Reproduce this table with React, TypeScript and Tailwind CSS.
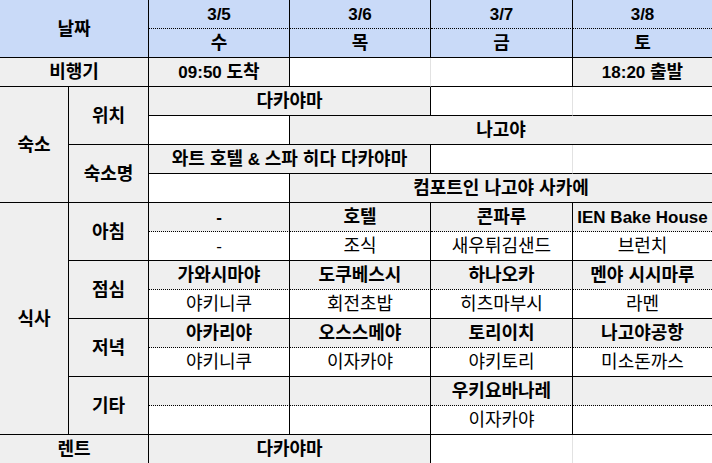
import React from 'react';

type Bg = 'blue' | 'gray' | 'white';
type Edge = 'solid' | 'light' | 'dotted' | 'none';

const bgClass: Record<Bg, string> = {
  blue: 'bg-[#c9daf8]',
  gray: 'bg-[#efefef]',
  white: 'bg-white',
};

const rightClass: Record<Edge, string> = {
  solid: 'border-r border-r-black',
  light: 'border-r border-r-[#e2e2e2]',
  dotted: 'border-r border-r-black',
  none: '',
};

const bottomClass: Record<Edge, string> = {
  solid: 'border-b border-b-black',
  light: 'border-b border-b-[#e2e2e2]',
  dotted: 'border-b border-b-black [border-bottom-style:dotted]',
  none: '',
};

const colSpanClass: Record<number, string> = { 1: '', 2: 'col-span-2', 3: 'col-span-3' };
const rowSpanClass: Record<number, string> = { 1: '', 2: 'row-span-2', 4: 'row-span-4', 8: 'row-span-8' };

// hangul runs are set a touch larger than the latin text, like the sheet's font does
const renderText = (t: string) =>
  t.split(/([\uAC00-\uD7A3]+(?:\s+[\uAC00-\uD7A3]+)*)/).map((part, i) =>
    /[\uAC00-\uD7A3]/.test(part) ? (
      <span key={i} className="text-[18px]">
        {part}
      </span>
    ) : (
      part
    )
  );

interface CellProps {
  t?: string;
  bg?: Bg;
  bold?: boolean;
  r?: Edge;
  b?: Edge;
  cs?: number;
  rs?: number;
}

const Cell: React.FC<CellProps> = ({ t = '', bg = 'white', bold = true, r = 'solid', b = 'solid', cs = 1, rs = 1 }) => (
  <div
    className={`flex items-center justify-center whitespace-pre overflow-hidden text-[17px] leading-none text-black ${
      bold ? 'font-bold' : 'font-normal'
    } ${bgClass[bg]} ${rightClass[r]} ${bottomClass[b]} ${colSpanClass[cs]} ${rowSpanClass[rs]}`}
  >
    <span>{renderText(t)}</span>
  </div>
);

const dates = [
  { d: '3/5', w: '수' },
  { d: '3/6', w: '목' },
  { d: '3/7', w: '금' },
  { d: '3/8', w: '토' },
];

const meals = [
  { label: '아침', top: ['-', '호텔', '콘파루', 'IEN Bake House'], bottom: ['-', '조식', '새우튀김샌드', '브런치'] },
  { label: '점심', top: ['가와시마야', '도쿠베스시', '하나오카', '멘야 시시마루'], bottom: ['야키니쿠', '회전초밥', '히츠마부시', '라멘'] },
  { label: '저녁', top: ['아카리야', '오스스메야', '토리이치', '나고야공항'], bottom: ['야키니쿠', '이자카야', '야키토리', '미소돈까스'] },
  { label: '기타', top: ['', '', '우키요바나레', ''], bottom: ['', '', '이자카야', ''] },
];

const App: React.FC = () => {
  return (
    <div
      className="w-[712px] h-[463px] overflow-hidden bg-white"
      style={{ fontFamily: '"Liberation Sans", "Noto Sans CJK KR", sans-serif' }}
    >
      <div className="grid grid-cols-[69px_80px_141px_141px_142px_139px] auto-rows-[29px]">
        {/* 날짜 header */}
        <Cell t="날짜" bg="blue" cs={2} rs={2} />
        {dates.map((x, i) => (
          <Cell key={x.d} t={x.d} bg="blue" b="dotted" r={i === 3 ? 'none' : 'solid'} />
        ))}
        {dates.map((x, i) => (
          <Cell key={x.w} t={x.w} bg="blue" r={i === 3 ? 'none' : 'solid'} />
        ))}

        {/* 비행기 */}
        <Cell t="비행기" bg="gray" cs={2} />
        <Cell t="09:50 도착" bg="gray" />
        <Cell r="light" />
        <Cell />
        <Cell t="18:20 출발" bg="gray" r="none" />

        {/* 숙소 */}
        <Cell t="숙소" bg="gray" rs={4} />
        <Cell t="위치" bg="gray" rs={2} />
        <Cell t="다카야마" bg="gray" cs={2} />
        <Cell r="light" />
        <Cell r="none" />
        <Cell />
        <Cell t="나고야" bg="gray" cs={3} r="none" />

        <Cell t="숙소명" bg="gray" rs={2} />
        <Cell t="와트 호텔 & 스파 히다 다카야마" bg="gray" cs={2} />
        <Cell r="light" />
        <Cell r="none" />
        <Cell />
        <Cell t="컴포트인 나고야 사카에" bg="gray" cs={3} r="none" />

        {/* 식사 */}
        <Cell t="식사" bg="gray" rs={8} />
        {meals.map((m) => (
          <React.Fragment key={m.label}>
            <Cell t={m.label} bg="gray" rs={2} />
            {m.top.map((t, i) => (
              <Cell key={`t${i}`} t={t} bg="gray" b="dotted" r={i === 3 ? 'none' : 'solid'} />
            ))}
            {m.bottom.map((t, i) => (
              <Cell key={`b${i}`} t={t} bold={false} r={i === 3 ? 'none' : 'solid'} />
            ))}
          </React.Fragment>
        ))}

        {/* 렌트 */}
        <Cell t="렌트" bg="gray" cs={2} />
        <Cell t="다카야마" bg="gray" cs={2} />
        <Cell r="light" />
        <Cell r="none" />
      </div>
    </div>
  );
};

export default App;
